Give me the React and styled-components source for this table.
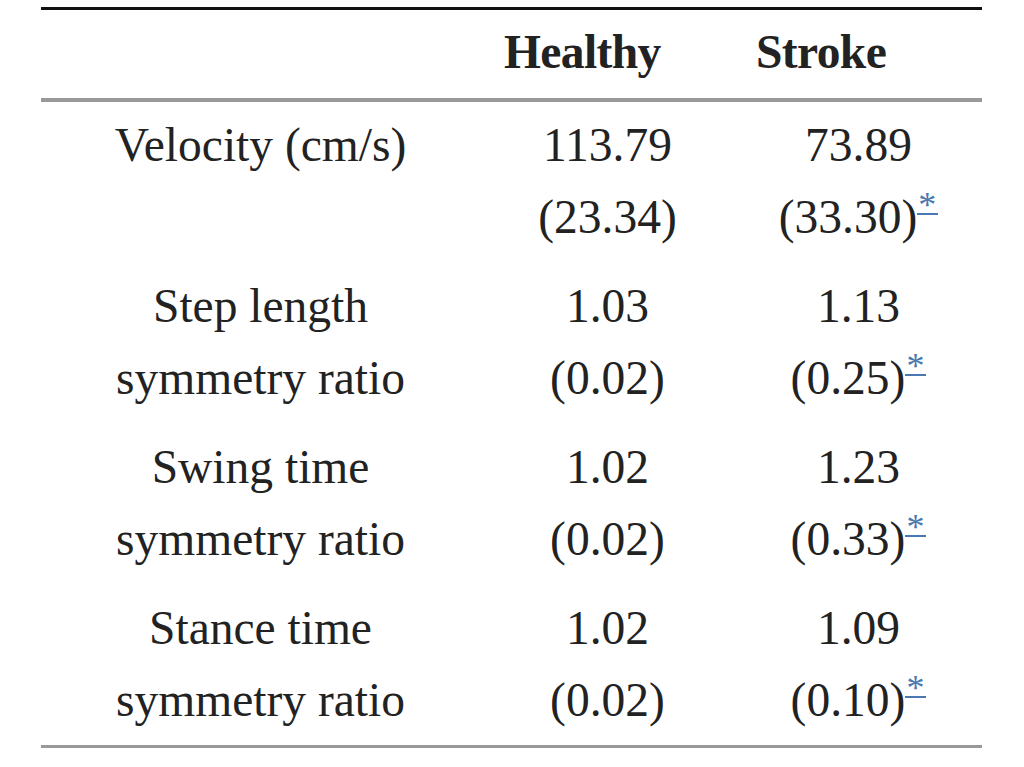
import React from "react";
import styled, { createGlobalStyle } from "styled-components";

const Global = createGlobalStyle`
  html, body { margin: 0; padding: 0; background: #fff; }
  body { font-family: "Liberation Serif", "Times New Roman", serif; color: #222; }
`;

const Page = styled.div`
  padding: 7px 42px 0 41px;
`;

const Table = styled.table`
  width: 941px;
  border-collapse: collapse;
  table-layout: fixed;
  border-top: 3px solid #111;
  border-bottom: 3px solid #999;
  font-size: 47.5px;
  line-height: 72px;
`;

const HeadRow = styled.tr`
  border-bottom: 4px solid #999;
`;

const Th = styled.th`
  font-weight: bold;
  text-align: left;
  padding: 6px 0 10px ${(p) => p.$indent}px;
  letter-spacing: -0.6px;
`;

const Td = styled.td`
  text-align: center;
  vertical-align: top;
  padding: ${(p) => (p.$first ? "7px" : "8px")} 0 9px;
`;

const Line = styled.div`
  white-space: nowrap;
`;

const Star = styled.a`
  display: inline-block;
  color: #4a78b0;
  font-size: 36px;
  line-height: 36px;
  height: 26px;
  vertical-align: 16px;
  padding: 0 2px 0 1px;
  border-bottom: 2px solid #4a78b0;
  text-decoration: none;
`;

const rows = [
  { label: ["Velocity (cm/s)"], h: ["113.79", "(23.34)"], s: ["73.89", "(33.30)"] },
  { label: ["Step length", "symmetry ratio"], h: ["1.03", "(0.02)"], s: ["1.13", "(0.25)"] },
  { label: ["Swing time", "symmetry ratio"], h: ["1.02", "(0.02)"], s: ["1.23", "(0.33)"] },
  { label: ["Stance time", "symmetry ratio"], h: ["1.02", "(0.02)"], s: ["1.09", "(0.10)"] },
];

export default function App() {
  return (
    <>
      <Global />
      <Page>
        <Table>
          <colgroup>
            <col style={{ width: 439 }} />
            <col style={{ width: 255 }} />
            <col style={{ width: 247 }} />
          </colgroup>
          <thead>
            <HeadRow>
              <Th $indent={0}></Th>
              <Th $indent={24}>Healthy</Th>
              <Th $indent={21}>Stroke</Th>
            </HeadRow>
          </thead>
          <tbody>
            {rows.map((r, i) => (
              <tr key={i}>
                <Td $first={i === 0}>
                  {r.label.map((l) => (
                    <Line key={l}>{l}</Line>
                  ))}
                </Td>
                <Td $first={i === 0}>
                  <Line>{r.h[0]}</Line>
                  <Line>{r.h[1]}</Line>
                </Td>
                <Td $first={i === 0}>
                  <Line>{r.s[0]}</Line>
                  <Line>
                    {r.s[1]}
                    <Star href="#">*</Star>
                  </Line>
                </Td>
              </tr>
            ))}
          </tbody>
        </Table>
      </Page>
    </>
  );
}
